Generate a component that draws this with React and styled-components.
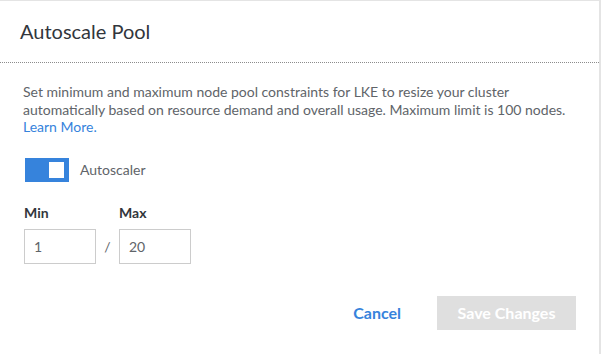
import React from "react";
import styled, { createGlobalStyle } from "styled-components";

const Global = createGlobalStyle`
  html, body { margin: 0; padding: 0; }
  body {
    background: #e4e4e4;
    font-family: Lato, "Noto Sans", sans-serif;
    -webkit-font-smoothing: antialiased;
  }
  * { box-sizing: border-box; }
`;

const Dialog = styled.div`
  margin-top: 1px;
  width: 599px;
  min-height: 353px;
  background: #fff;
`;

const Header = styled.div`
  padding: 18px 24px 19px 20px;
  border-bottom: 1px dotted #8c8c8c;
`;

const Title = styled.h2`
  margin: 0;
  font-size: 20px;
  line-height: 24px;
  font-weight: 400;
  color: #32363c;
`;

const Body = styled.div`
  padding: 20px 23px 0 23px;
`;

const Copy = styled.p`
  margin: 0;
  font-size: 14px;
  line-height: 17.5px;
  color: #606469;
`;

const Link = styled.a`
  color: #3683dc;
  text-decoration: none;
`;

const ToggleRow = styled.label`
  display: flex;
  align-items: center;
  gap: 11px;
  margin-top: 22px;
  padding-left: 2px;
`;

const Switch = styled.span`
  display: flex;
  justify-content: ${(p) => (p.$on ? "flex-end" : "flex-start")};
  align-items: center;
  width: 44px;
  height: 24px;
  padding: 4px 5px;
  background: ${(p) => (p.$on ? "#3683dc" : "#c9cacb")};
`;

const Thumb = styled.span`
  width: 15px;
  height: 16px;
  background: #fff;
`;

const ToggleText = styled.span`
  font-size: 14px;
  color: #606469;
`;

const Fields = styled.div`
  display: flex;
  align-items: flex-end;
  margin-top: 22px;
  padding-left: 1px;
`;

const Field = styled.div`
  display: flex;
  flex-direction: column;
  gap: 8px;
`;

const FieldLabel = styled.span`
  font-size: 14px;
  line-height: 17px;
  font-weight: 700;
  color: #32363c;
`;

const Input = styled.div`
  width: 72px;
  height: 35px;
  border: 1px solid #ccc;
  padding: 0 9px;
  display: flex;
  align-items: center;
  font-size: 14px;
  color: #606469;
`;

const Slash = styled.span`
  width: 23px;
  height: 35px;
  display: flex;
  align-items: center;
  justify-content: center;
  font-size: 14px;
  color: #606469;
`;

const Actions = styled.div`
  display: flex;
  justify-content: flex-end;
  align-items: center;
  gap: 18px;
  margin-top: 32px;
`;

const TextButton = styled.button`
  border: 0;
  background: none;
  padding: 0 18px;
  height: 34px;
  font-family: inherit;
  font-size: 16px;
  font-weight: 700;
  color: #3683dc;
`;

const PrimaryButton = styled.button`
  border: 0;
  width: 139px;
  height: 34px;
  background: #dfdfdf;
  font-family: inherit;
  font-size: 16px;
  font-weight: 700;
  color: #fff;
`;

export default function App() {
  return (
    <>
      <Global />
      <Dialog>
        <Header>
          <Title>Autoscale Pool</Title>
        </Header>
        <Body>
          <Copy>
            Set minimum and maximum node pool constraints for LKE to resize your cluster
            automatically based on resource demand and overall usage. Maximum limit is 100 nodes.{" "}
            <Link href="#">Learn More.</Link>
          </Copy>
          <ToggleRow>
            <Switch $on>
              <Thumb />
            </Switch>
            <ToggleText>Autoscaler</ToggleText>
          </ToggleRow>
          <Fields>
            <Field>
              <FieldLabel>Min</FieldLabel>
              <Input>1</Input>
            </Field>
            <Slash>/</Slash>
            <Field>
              <FieldLabel>Max</FieldLabel>
              <Input>20</Input>
            </Field>
          </Fields>
          <Actions>
            <TextButton>Cancel</TextButton>
            <PrimaryButton disabled>Save Changes</PrimaryButton>
          </Actions>
        </Body>
      </Dialog>
    </>
  );
}
